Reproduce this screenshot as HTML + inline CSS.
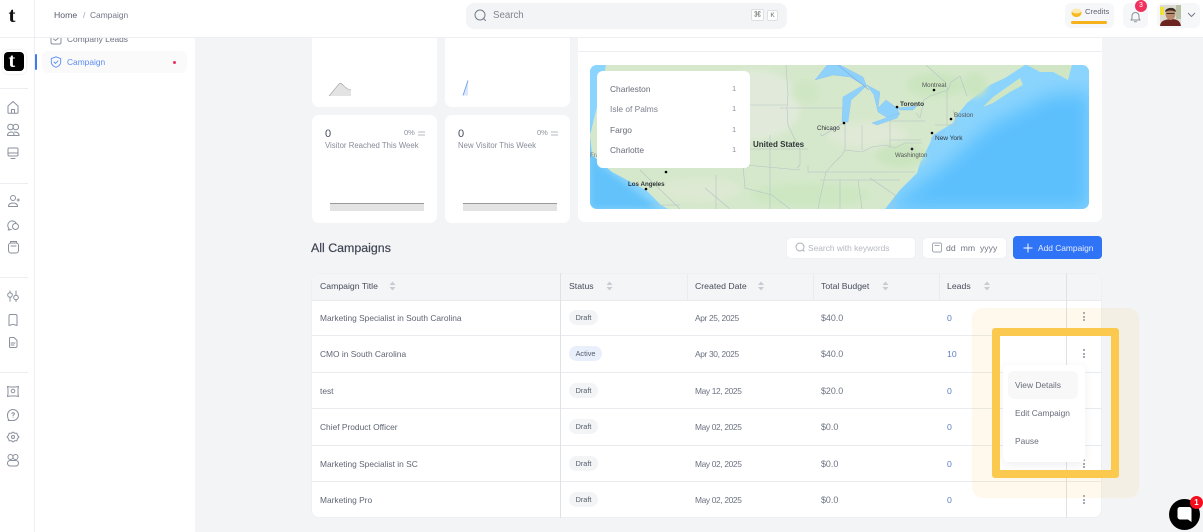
<!DOCTYPE html>
<html><head><meta charset="utf-8"><title>Campaign</title>
<style>
html,body{margin:0;padding:0;background:#f3f4f6}
#r{position:relative;width:1203px;height:532px;overflow:hidden;background:#f3f4f6;font-family:"Liberation Sans",sans-serif;color:#6b7280;filter:blur(.35px)}
#r div,#r span.t{position:absolute;box-sizing:border-box}
.t{white-space:nowrap;line-height:10px;font-size:8.4px}
.card{background:#fff;border-radius:7px}
svg{position:absolute;overflow:visible}
.ic{fill:none;stroke:#8a909c;stroke-width:1;stroke-linecap:round;stroke-linejoin:round}
.hl{background:#e9ebef;height:1px;left:311px;width:791px}
.vl{width:1px;background:#e9ebef}
.pill{height:15px;border-radius:8px;background:#f3f4f6;color:#555c6b;font-size:7.3px;line-height:15px;text-align:center;left:569px;width:29px}
.h{color:#474d5c;top:281px;font-size:8.7px}
.c{color:#5f6573}
.d{font-size:8.4px;letter-spacing:-.35px;left:695px;color:#6b7280}
.m{font-size:8.9px;left:821px;color:#6b7280}
.l{left:947px;color:#5a7fc0;font-size:8.7px}
.kb{width:2px;height:2px;border-radius:1px;background:#8a8f9c;left:1083px}
</style></head><body><div id="r">

<!-- side nav -->
<div style="left:0;top:0;width:35px;height:532px;background:#fff;border-right:1px solid #eceef1"></div>
<div style="left:35px;top:0;width:160px;height:532px;background:#fff"></div>
<span class="t" style="left:67px;top:34px;color:#6b7280">Company Leads</span>
<svg style="left:50px;top:33px" width="12" height="12" viewBox="0 0 12 12"><path class="ic" d="M1 2.500h10v7a1.500 1.500 0 0 1-1.500 1.500h-7A1.500 1.500 0 0 1 1 9.500zM3.500 6l2 1.500L8.500 5"/></svg>
<div style="left:42px;top:51px;width:145px;height:22px;border-radius:6px;background:#fafafa"></div>
<div style="left:35px;top:54px;width:2px;height:16px;background:#3b7bf6;border-radius:1px"></div>
<svg style="left:50px;top:56px" width="12" height="12" viewBox="0 0 12 12"><path d="M6 .8 10.700 2.600V6c0 2.700-2 4.300-4.700 5.300C3.300 10.300 1.300 8.700 1.300 6V2.600zM4 6l1.500 1.500L8 4.800" fill="none" stroke="#5a8df2" stroke-width=".9" stroke-linecap="round" stroke-linejoin="round"/></svg>
<span class="t" style="left:67px;top:57px;color:#5a8df2">Campaign</span>
<div style="left:172.500px;top:60.500px;width:3px;height:3px;border-radius:50%;background:#ef2d62"></div>

<!-- rail -->
<div style="left:3px;top:50px;width:23px;height:24px;background:#fff;border-radius:5px;box-shadow:0 0 2px #ddd"></div>
<div style="left:4px;top:52px;width:20px;height:19px;background:#000;border-radius:4px"></div>
<span class="t" style="left:8.500px;top:51px;font-size:20px;line-height:20px;font-weight:700;color:#fff;font-family:'Liberation Serif',serif">t</span>
<div style="left:0;top:88px;width:28px;height:1px;background:#eceef1"></div>
<div style="left:0;top:183px;width:28px;height:1px;background:#eceef1"></div>
<div style="left:0;top:277px;width:28px;height:1px;background:#eceef1"></div>
<div style="left:0;top:372px;width:28px;height:1px;background:#eceef1"></div>
<svg style="left:0;top:0" width="35" height="532" viewBox="0 0 35 532"><g class="ic">
<path d="M8 106l5-4.500 5 4.500v6.500a.8.800 0 0 1-.8.800H8.800a.8.800 0 0 1-.8-.8zM11.500 113v-3.500h3V113"/>
<circle cx="10.500" cy="127" r="2.800"/><circle cx="15.800" cy="127" r="2.800"/><path d="M7.500 135.500c0-2.500 2-3.500 4-3.500s2.500 1 2.500 3.500zM14.500 132c2 0 4.500.500 4.500 3.500h-5"/>
<rect x="8" y="148" width="10" height="8" rx="1.200"/><path d="M8 153h10M11 158.500h4"/>
<circle cx="13" cy="198" r="2.500"/><path d="M8.500 206.500c0-2.500 1.500-3.500 4.500-3.500s4.500 1 4.500 3.500zM17 200h2.500M18.200 198.800v2.400"/>
<path d="M9 228.500c-1-1-1.500-2.500-1-4.500 .8-2.500 3-3.500 5-3 1.500.3 2.500 1 3 2M9 228.500l-.8 1.500 3-.5"/><circle cx="15.500" cy="226.500" r="3"/>
<rect x="8.500" y="243" width="10" height="10" rx="2.500"/><path d="M10.500 243v-1.500h6V243M11 246h5"/>
<circle cx="10" cy="295" r="2.300"/><path d="M10 292.700V291M10 297.300v4"/><circle cx="16" cy="297.500" r="2.300"/><path d="M16 295.200V291M16 299.800v1.700"/>
<path d="M9 316a1.500 1.500 0 0 1 1.500-1.500h5A1.500 1.500 0 0 1 17 316v9.500l-4-1.200-4 1.200z"/>
<path d="M9.500 338.500a1 1 0 0 1 1-1h3.500l3 3v6a1.500 1.500 0 0 1-1 1h-5.500a1 1 0 0 1-1-1zM11 343h4M11 345h3"/>
<path d="M10 387h6l2.500-.5-.5 2.500v5l.5 2.500-2.500-.5h-6l-2.500.5.500-2.500v-5l-.5-2.500z"/><circle cx="13" cy="391" r="1.800"/>
<path d="M9 420c-1.500-1.500-1.500-3.500-1.500-5a5.500 5.500 0 1 1 5.500 5.500H8.200z"/><path d="M11.800 413.500c.5-1.200 2.500-1 2.600.3 0 1-1.400 1-1.400 2M13 417.200v.1"/>
<path d="M13 432l1.500 1.200h2.300l.7 2.200 1.500 1.600-1.500 1.600-.7 2.200h-2.300L13 442l-1.500-1.200H9.200l-.7-2.200L7 437l1.500-1.600.7-2.200h2.300z"/><circle cx="13" cy="437" r="1.500"/>
<circle cx="10.500" cy="457" r="2.500"/><circle cx="15.500" cy="457" r="2.500"/><rect x="7.500" y="460.500" width="11" height="5.500" rx="2.700"/>
</g></svg>

<!-- cards -->
<div class="card" style="left:312px;top:30px;width:125px;height:77px"></div>
<div class="card" style="left:445px;top:30px;width:125px;height:77px"></div>
<div class="card" style="left:312px;top:115px;width:125px;height:108px"></div>
<div class="card" style="left:445px;top:115px;width:125px;height:108px"></div>
<svg style="left:0;top:0" width="1203" height="532" viewBox="0 0 1203 532">
<path d="M329 96 339 84Q340 83 341 83.500C344 85 345 89 351 90V96z" fill="#e3e3e3"/>
<path d="M329 96 339 84Q340 83 341 83.500C344 85 345 89 351 90" fill="none" stroke="#a8a8a8" stroke-width=".7"/>
<path d="M463 95.500 468 80.500V95.500z" fill="#dbe7fb"/><path d="M463 95.500 468 80.500" fill="none" stroke="#6d9df3" stroke-width=".9"/>
<rect x="330" y="203" width="94" height="8" fill="#e3e3e3"/><rect x="330" y="203" width="94" height="1" fill="#9a9a9a"/>
<rect x="463" y="203" width="94" height="8" fill="#e3e3e3"/><rect x="463" y="203" width="94" height="1" fill="#9a9a9a"/>
<path d="M418 132h7M418 135h7M551 132h7M551 135h7" stroke="#9ca1ab" stroke-width=".8"/>
</svg>
<span class="t" style="left:325px;top:129px;font-size:11px;color:#444a58">0</span>
<span class="t" style="left:458px;top:129px;font-size:11px;color:#444a58">0</span>
<span class="t" style="left:404px;top:128px;font-size:7.500px;color:#8a8f9c">0%</span>
<span class="t" style="left:537px;top:128px;font-size:7.500px;color:#8a8f9c">0%</span>
<span class="t" style="left:325px;top:141px;color:#878c99;font-size:7.800px">Visitor Reached This Week</span>
<span class="t" style="left:458px;top:141px;color:#878c99;font-size:7.800px">New Visitor This Week</span>

<!-- map card -->
<div class="card" style="left:578px;top:30px;width:524px;height:192px"></div>
<div style="left:578px;top:51px;width:524px;height:1px;background:#eceef1"></div>
<div style="left:590px;top:65px;width:499px;height:144px;border-radius:7px;overflow:hidden;background:#8bd5fd">
<svg style="left:0;top:0" width="499" height="144" viewBox="590 65 499 144">
<defs><filter id="b"><feGaussianBlur stdDeviation="9"/></filter><filter id="s"><feGaussianBlur stdDeviation="3.500"/></filter></defs>
<rect x="590" y="65" width="499" height="144" fill="#8ad4fd"/>
<path d="M1050 95 1089 92V209H885L945 165 990 125z" fill="#5cc0fd" filter="url(#b)"/>
<path d="M590 120 590 209H660L600 165z" fill="#62c2f9" filter="url(#s)"/>
<path d="M606 65 600 95 590 135 592 155 612 172 646 190 661 205 668 209H885L900 190 917 173 920 163 930 143 933 135 953 123 957 115 967 103 977 95 990 85 1005 78 1025 65z" fill="#d5e8cb"/>
<path d="M983 107 993 97 1020 78 1023 85 1010 92 993 103z" fill="#cfe5c3"/>
<path d="M1027 65H1072L1068 80 1053 72 1040 72z" fill="#cfe5c3"/>
<g filter="url(#s)">
<ellipse cx="755" cy="105" rx="45" ry="35" fill="#e1eada"/><ellipse cx="868" cy="135" rx="40" ry="14" fill="#dfe9d5"/>
<ellipse cx="935" cy="85" rx="28" ry="12" fill="#cae5bf"/><ellipse cx="900" cy="155" rx="24" ry="12" fill="#cae5bf"/>
<ellipse cx="810" cy="195" rx="60" ry="12" fill="#cde7c2"/><ellipse cx="700" cy="190" rx="40" ry="12" fill="#dde9d2"/>
<ellipse cx="805" cy="92" rx="14" ry="12" fill="#cfe6c4"/><ellipse cx="975" cy="85" rx="12" ry="12" fill="#cae5bf"/>
</g>
<g fill="#8ed1fb" stroke="#8cc0ee" stroke-width=".4">
<path d="M815 80 827 65H840L863 77 867 87 850 77 833 75z"/>
<path d="M842 122 843 97 860 87 867 85 858 94 851 100 848 122z"/>
<path d="M867 85 880 92 878 108 886 100 897 108 899 113 888 118 878 112 874 95z"/>
<path d="M872 123 900 113 897 118 877 125z"/>
<path d="M897 108 917 106 913 110 900 110z"/>
<path d="M931 138 945 131 943 134 934 140z"/>
</g>
<g fill="none" stroke="#b4c0c6" stroke-width=".55">
<path d="M786 65 788 95 787 108 788 125 800 150 800 165 797 168M740 105H787M788 108H812 821 845M787 108 780 108M820 134 822 136 845 122 845 150 842 155 832 165 826 172 808 172M845 123V150M862 125V150M890 121V148M890 121H925M890 140H921M845 150 862 152 872 147 885 145 895 148 905 143 922 143M808 165V172H915M826 172 820 198 818 209M840 180V209M858 180 862 209M820 180H900M870 178 895 195 893 209"/>
<path d="M770 135V209M700 149H808M716 175V209M716 165 745 165 800 170M743 165 745 188 772 195 790 209M640 170 680 209M705 188 730 209M650 205H680"/>
<path d="M926 65 945 82 948 90 930 96 924 100 920 118 916 113M947 90V125M967 96 960 76 951 82 948 90M935 125H958M953 110 957 123"/>
<path d="M838 65 869 90" stroke="#7fa9dc"/>
</g>
<g font-family="'Liberation Sans',sans-serif" fill="#2f3338" font-size="6.200">
<text x="817" y="130">Chicago</text><text x="900" y="106" font-size="6.500" font-weight="700">Toronto</text>
<text x="922" y="87" fill="#555">Montreal</text><text x="954" y="117" fill="#555">Boston</text>
<text x="935" y="140" font-size="6.500">New York</text><text x="895" y="157" fill="#555">Washington</text>
<text x="753" y="147" font-size="8" font-weight="700" fill="#30353a">United States</text><text x="628" y="186" font-weight="700">Los Angeles</text>
<text x="590" y="157" fill="#777">Fra</text>
</g>
<g fill="#000"><circle cx="844" cy="123" r="1.300"/><circle cx="897" cy="107" r="1.300"/><circle cx="934" cy="90" r="1.300"/><circle cx="951" cy="119" r="1.300"/><circle cx="932" cy="133" r="1.300"/><circle cx="666" cy="172" r="1.300"/><circle cx="646" cy="189" r="1.300"/></g>
<circle cx="912" cy="149" r="1.700" fill="#222" stroke="#fff" stroke-width=".5"/>
</svg></div>
<div style="left:597px;top:71px;width:153px;height:97px;background:#fff;border-radius:6px"></div>
<span class="t" style="left:610px;top:84px;color:#666c79">Charleston</span><span class="t" style="left:732px;top:84px;font-size:7.500px;color:#8a8f9c">1</span>
<span class="t" style="left:610px;top:104px;color:#7b808d">Isle of Palms</span><span class="t" style="left:732px;top:104px;font-size:7.500px;color:#8a8f9c">1</span>
<span class="t" style="left:610px;top:125px;color:#666c79">Fargo</span><span class="t" style="left:732px;top:125px;font-size:7.500px;color:#8a8f9c">1</span>
<span class="t" style="left:610px;top:145px;color:#666c79">Charlotte</span><span class="t" style="left:732px;top:145px;font-size:7.500px;color:#8a8f9c">1</span>

<!-- header -->
<div style="left:35px;top:0;width:1168px;height:38px;background:#fff;border-bottom:1px solid #eceef1"></div>
<div style="left:0;top:0;width:35px;height:38px;background:#fff;border-bottom:1px solid #eceef1;border-right:1px solid #eceef1"></div>
<span class="t" style="left:8.500px;top:3px;font-size:21px;line-height:24px;font-weight:700;color:#111;font-family:'Liberation Serif',serif">t</span>
<span class="t" style="left:54px;top:10px;color:#565c6a;font-size:8.700px">Home</span>
<span class="t" style="left:83px;top:10px;color:#a2a6b0">/</span>
<span class="t" style="left:90px;top:10px;color:#737885">Campaign</span>
<div style="left:466px;top:3px;width:321px;height:26px;background:#f3f4f6;border-radius:8px"></div>
<svg style="left:474px;top:9px" width="13" height="13" viewBox="0 0 13 13"><circle cx="6" cy="6" r="5" fill="none" stroke="#767c89"/><path d="M9.500 9.500 11.500 11.500" stroke="#767c89" stroke-linecap="round"/></svg>
<span class="t" style="left:493px;top:11px;font-size:9.700px;color:#80858f">Search</span>
<div style="left:751px;top:9px;width:13px;height:12px;background:#fff;border:1px solid #dcdfe4;border-radius:2px;font-size:8px;line-height:10px;text-align:center;color:#777">⌘</div>
<div style="left:767px;top:10px;width:11px;height:11px;background:#fff;border:1px solid #dcdfe4;border-radius:2px;font-size:6.500px;line-height:9px;text-align:center;color:#666">K</div>

<div style="left:1065px;top:3px;width:49px;height:25px;background:#f6f7f9;border-radius:6px"></div>
<svg style="left:1070px;top:7px" width="13" height="11" viewBox="0 0 13 11"><ellipse cx="6.500" cy="6" rx="5" ry="4" fill="#f6b91f"/><ellipse cx="6.500" cy="4" rx="4.700" ry="2.500" fill="#fdeab3"/></svg>
<span class="t" style="left:1085px;top:7px;font-size:7.700px;color:#5f6573">Credits</span>
<div style="left:1071px;top:21px;width:36px;height:3px;background:#f5b21b;border-radius:2px"></div>
<div style="left:1123px;top:3px;width:25px;height:25px;background:#f6f7f9;border-radius:6px"></div>
<svg style="left:1130px;top:11px" width="11" height="12" viewBox="0 0 11 12"><path class="ic" d="M2 7.500V5a3.500 3.500 0 0 1 7 0v2.500l1 1.500H1zM4.500 10.800h2"/></svg>
<div style="left:1135px;top:0;width:12px;height:12px;border-radius:50%;background:#f0325f;color:#fff;font-size:7px;line-height:12px;text-align:center">3</div>
<div style="left:1157px;top:3px;width:43px;height:25px;background:#f6f7f9;border-radius:6px"></div>
<svg style="left:1160px;top:5px;border-radius:3px" width="21" height="21" viewBox="0 0 21 21"><rect width="21" height="21" fill="#dedcd0"/><rect width="4" height="8" y="2" fill="#efe23a"/><rect x="16" width="5" height="14" fill="#b9c0a6"/><path d="M0 21c1-6 5-6 10-7 6 0 10 1 11 7z" fill="#6b241f"/><ellipse cx="10.500" cy="9" rx="5" ry="6" fill="#b98a6b"/><path d="M5 7c0-5 11-6 11 0-3-2-8-2-11 0z" fill="#3a2c22"/><path d="M6.500 8.500h8" stroke="#3a3028" stroke-width="1"/></svg>
<svg style="left:1187px;top:12px" width="9" height="6" viewBox="0 0 9 6"><path d="M1 1 4.500 4.500 8 1" fill="none" stroke="#767c89"/></svg>

<!-- All campaigns -->
<span class="t" style="left:311px;top:242px;font-size:12.400px;line-height:13px;color:#3f4554;-webkit-text-stroke:.2px #3f4554">All Campaigns</span>
<div style="left:786px;top:237px;width:130px;height:22px;background:#fff;border:1px solid #eef0f3;border-radius:5px"></div>
<svg style="left:795px;top:242px" width="11" height="11" viewBox="0 0 11 11"><circle cx="5" cy="5" r="4" fill="none" stroke="#a7abb4" stroke-width=".9"/><path d="M8 8l1.500 1.500" stroke="#a7abb4"/></svg>
<span class="t" style="left:808px;top:243px;color:#b4b8c0">Search with keywords</span>
<div style="left:922px;top:237px;width:85px;height:22px;background:#fff;border:1px solid #eef0f3;border-radius:5px"></div>
<svg style="left:932px;top:242px" width="10" height="11" viewBox="0 0 10 11"><rect x=".5" y="1" width="9" height="9" rx="1.500" fill="none" stroke="#9ea3ad" stroke-width=".9"/><path d="M2.500 3.500h5" stroke="#9ea3ad" stroke-width=".9"/></svg>
<span class="t" style="left:946px;top:243px;color:#6f7582;word-spacing:2.500px;font-size:8.700px">dd mm yyyy</span>
<div style="left:1013px;top:236px;width:89px;height:23px;background:#2f73f6;border-radius:4px"></div>
<svg style="left:1023px;top:243px" width="10" height="10" viewBox="0 0 10 10"><path d="M5 .5v9M.5 5h9" stroke="#fff" stroke-width="1"/></svg>
<span class="t" style="left:1038px;top:243px;color:#e8effd">Add Campaign</span>

<!-- table -->
<div style="left:311px;top:273px;width:791px;height:245px;background:#fff;border:1px solid #eef0f3;border-radius:8px"></div>
<div style="left:312px;top:274px;width:789px;height:26px;background:#f4f5f7;border-radius:7px 7px 0 0"></div>
<div class="hl" style="top:300px"></div><div class="hl" style="top:335px"></div><div class="hl" style="top:372px"></div><div class="hl" style="top:408px"></div><div class="hl" style="top:445px"></div><div class="hl" style="top:481px"></div>
<div class="vl" style="left:560px;top:273px;height:245px;background:#dfe1e5"></div>
<div class="vl" style="left:687px;top:274px;height:26px"></div>
<div class="vl" style="left:813px;top:274px;height:26px"></div>
<div class="vl" style="left:939px;top:274px;height:26px"></div>
<div class="vl" style="left:1066px;top:273px;height:245px;background:#dfe1e5"></div>

<span class="t h" style="left:320px">Campaign Title</span>
<span class="t h" style="left:569px">Status</span>
<span class="t h" style="left:695px">Created Date</span>
<span class="t h" style="left:821px">Total Budget</span>
<span class="t h" style="left:947px">Leads</span>
<svg style="left:0;top:0" width="1203" height="532" viewBox="0 0 1203 532"><g fill="#c8cbd1">
<path d="M389.500 285 392.500 281.500 395.500 285zM389.500 287 392.500 290.500 395.500 287z"/>
<path d="M606.500 285 609.500 281.500 612.500 285zM606.500 287 609.500 290.500 612.500 287z"/>
<path d="M758 285 761 281.500 764 285zM758 287 761 290.500 764 287z"/>
<path d="M882.500 285 885.500 281.500 888.500 285zM882.500 287 885.500 290.500 888.500 287z"/>
<path d="M984 285 987 281.500 990 285zM984 287 987 290.500 990 287z"/></g></svg>

<span class="t c" style="left:320px;top:313px">Marketing Specialist in South Carolina</span>
<span class="t c" style="left:320px;top:349px">CMO in South Carolina</span>
<span class="t c" style="left:320px;top:386px">test</span>
<span class="t c" style="left:320px;top:422px">Chief Product Officer</span>
<span class="t c" style="left:320px;top:459px">Marketing Specialist in SC</span>
<span class="t c" style="left:320px;top:495px">Marketing Pro</span>

<div class="pill" style="top:310px">Draft</div>
<div class="pill" style="top:346px;width:33px;background:#e9f0fb">Active</div>
<div class="pill" style="top:383px">Draft</div>
<div class="pill" style="top:419px">Draft</div>
<div class="pill" style="top:456px">Draft</div>
<div class="pill" style="top:492px">Draft</div>

<span class="t d" style="top:313px">Apr 25, 2025</span><span class="t m" style="top:313px">$40.0</span><span class="t l" style="top:313px">0</span>
<span class="t d" style="top:349px">Apr 30, 2025</span><span class="t m" style="top:349px">$40.0</span><span class="t l" style="top:349px">10</span>
<span class="t d" style="top:386px">May 12, 2025</span><span class="t m" style="top:386px">$20.0</span><span class="t l" style="top:386px">0</span>
<span class="t d" style="top:422px">May 02, 2025</span><span class="t m" style="top:422px">$0.0</span><span class="t l" style="top:422px">0</span>
<span class="t d" style="top:459px">May 02, 2025</span><span class="t m" style="top:459px">$0.0</span><span class="t l" style="top:459px">0</span>
<span class="t d" style="top:495px">May 02, 2025</span><span class="t m" style="top:495px">$0.0</span><span class="t l" style="top:495px">0</span>

<div class="kb" style="top:312px"></div><div class="kb" style="top:315.500px"></div><div class="kb" style="top:319px"></div>
<div class="kb" style="top:349px"></div><div class="kb" style="top:352.500px"></div><div class="kb" style="top:356px"></div>
<div class="kb" style="top:459px"></div><div class="kb" style="top:462.500px"></div><div class="kb" style="top:466px"></div>
<div class="kb" style="top:495px"></div><div class="kb" style="top:498.500px"></div><div class="kb" style="top:502px"></div>

<!-- dropdown -->
<div style="left:1003px;top:365px;width:82px;height:97px;background:#fff;border-radius:5px;box-shadow:0 3px 10px rgba(60,70,90,.08)"></div>
<div style="left:1008px;top:371px;width:70px;height:28px;background:#f8f8f9;border-radius:6px"></div>
<span class="t" style="left:1015px;top:380px;color:#676d7a">View Details</span>
<span class="t" style="left:1015px;top:408px;color:#676d7a">Edit Campaign</span>
<span class="t" style="left:1015px;top:436px;color:#676d7a">Pause</span>

<!-- highlight -->
<div style="left:992px;top:328px;width:127px;height:150px;border:8px solid #fcc94f;border-radius:3px;box-shadow:0 0 0 20px rgba(250,200,80,.11)"></div>

<!-- chat -->
<div style="left:1169px;top:499px;width:31px;height:31px;border-radius:50%;background:#000"></div>
<svg style="left:1177px;top:507px" width="15" height="15" viewBox="0 0 15 15"><path d="M3 0h9a2.500 2.500 0 0 1 2.500 2.500V15L11 12.500H3A2.500 2.500 0 0 1 .5 10V2.500A2.500 2.500 0 0 1 3 0z" fill="#fff"/></svg>
<div style="left:1190px;top:496px;width:13px;height:13px;border-radius:50%;background:#f50d1d;color:#fff;font-size:8px;font-weight:700;line-height:13px;text-align:center">1</div>
</div></body></html>
